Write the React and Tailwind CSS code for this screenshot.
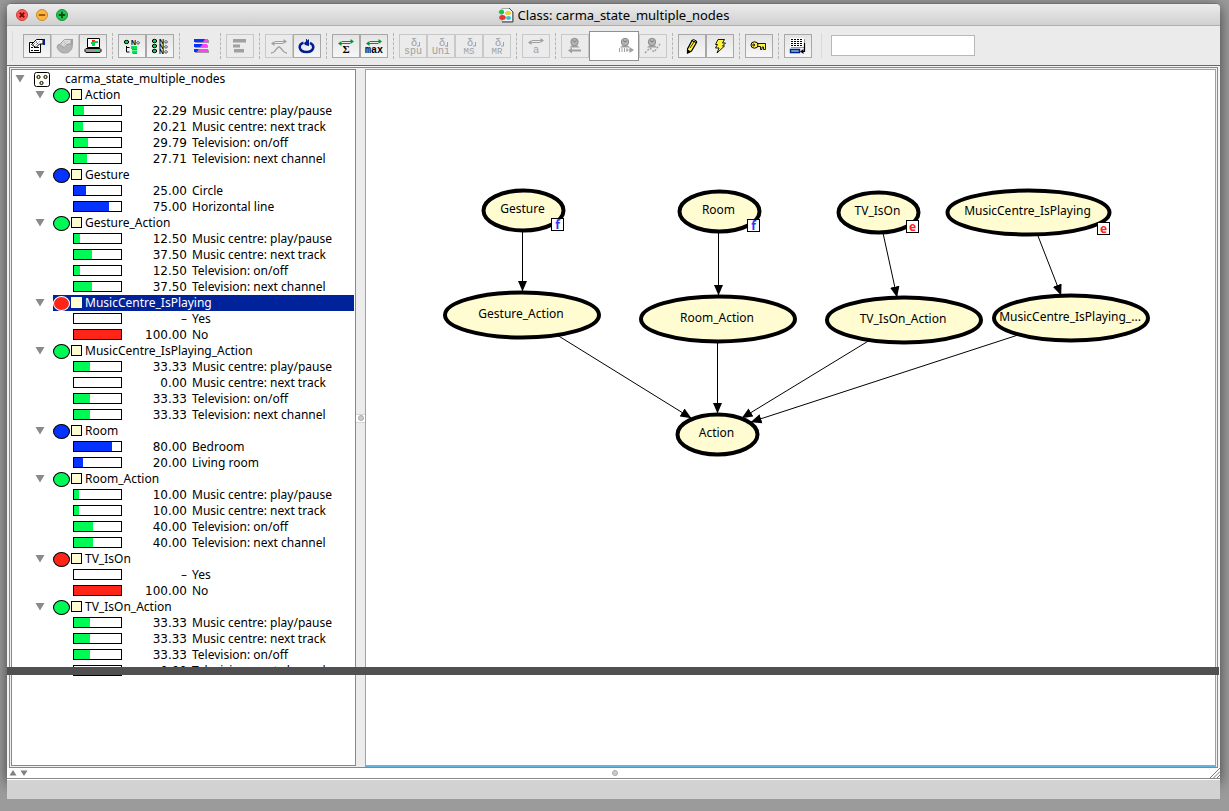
import React from "react";

const UI = "font-['Noto_Sans',sans-serif]";

const FILL = { green: "bg-[#00fa55]", blue: "bg-[#0433ff]", red: "bg-[#ff2418]" };

const ACTIONS = [
  "Music centre: play/pause",
  "Music centre: next track",
  "Television: on/off",
  "Television: next channel",
];
const withActions = (values) => values.map((v, i) => [v, ACTIONS[i]]);

const GROUPS = [
  { name: "Action", color: "green", states: withActions(["22.29", "20.21", "29.79", "27.71"]) },
  { name: "Gesture", color: "blue", states: [["25.00", "Circle"], ["75.00", "Horizontal line"]] },
  { name: "Gesture_Action", color: "green", states: withActions(["12.50", "37.50", "12.50", "37.50"]) },
  { name: "MusicCentre_IsPlaying", color: "red", selected: true, states: [["–", "Yes"], ["100.00", "No"]] },
  { name: "MusicCentre_IsPlaying_Action", color: "green", states: withActions(["33.33", "0.00", "33.33", "33.33"]) },
  { name: "Room", color: "blue", states: [["80.00", "Bedroom"], ["20.00", "Living room"]] },
  { name: "Room_Action", color: "green", states: withActions(["10.00", "10.00", "40.00", "40.00"]) },
  { name: "TV_IsOn", color: "red", states: [["–", "Yes"], ["100.00", "No"]] },
  { name: "TV_IsOn_Action", color: "green", states: withActions(["33.33", "33.33", "33.33", "0.00"]) },
];

function Disclosure({ label }) {
  return (
    <button type="button" aria-label={`Collapse ${label}`} aria-expanded="true" className="flex h-4 w-3 shrink-0 items-center justify-center">
      <svg width="10" height="8" viewBox="0 0 10 8"><path d="M0.5 0h9L5 7.5z" fill="#8a8a8a" /></svg>
    </button>
  );
}

function StateRow({ value, label, color }) {
  const pct = parseFloat(value) || 0;
  return (
    <li className="flex h-4 items-start pl-[61px]">
      <span className="mt-[2px] h-[11px] w-[49px] shrink-0 border border-black bg-white">
        <span className={`block h-full ${FILL[color]}`} style={{ width: `${pct}%` }} />
      </span>
      <span className="w-[65px] shrink-0 text-right font-['DejaVu_Sans',sans-serif]">{value}</span>
      <span className="ml-[5px] whitespace-nowrap">{label}</span>
    </li>
  );
}

function Group({ name, color, selected, states }) {
  return (
    <li>
      <div className="flex h-4 items-center pl-[22px]">
        <Disclosure label={name} />
        <div className={`ml-[7px] flex h-4 grow items-start ${selected ? "bg-[#00229b] text-white" : ""}`}>
          <span className={`mt-px h-[15px] w-[17px] rounded-[50%] border ${selected ? "border-white" : "border-black"} ${FILL[color]}`} />
          <span className={`mt-[2px] ml-px h-[11px] w-[11px] border bg-[#fffcd2] ${selected ? "border-[#fffcd2]" : "border-black"}`} />
          <span className="ml-[3px]">{name}</span>
        </div>
      </div>
      <ul>
        {states.map(([v, l], i) => <StateRow key={i} value={v} label={l} color={color} />)}
      </ul>
    </li>
  );
}

function Tree() {
  return (
    <ul className="pt-px pr-px text-[12px] leading-4 text-black">
      <li>
        <div className="flex h-4 items-center pl-[2px]">
          <Disclosure label="carma_state_multiple_nodes" />
          <svg className="ml-[8px]" width="16" height="16" viewBox="0 0 16 16">
            <rect x="0.5" y="1.5" width="15" height="14" rx="2" fill="#fff" stroke="#000" />
            {[[4.5, 6], [11.5, 6], [7.5, 12]].map(([x, y]) => (
              <circle key={x} cx={x} cy={y} r="1.6" fill="#f5ef7a" stroke="#000" />
            ))}
          </svg>
          <span className="ml-[15px]">carma_state_multiple_nodes</span>
        </div>
        <ul>{GROUPS.map((g) => <Group key={g.name} {...g} />)}</ul>
      </li>
    </ul>
  );
}

const NODES = [
  { label: "Gesture", cx: 157.5, cy: 140.5, rx: 40, ry: 20, badge: ["f", 185, 148] },
  { label: "Room", cx: 353.5, cy: 141.5, rx: 40, ry: 20, badge: ["f", 381, 149] },
  { label: "TV_IsOn", cx: 512.5, cy: 142.5, rx: 40, ry: 20, badge: ["e", 540, 150] },
  { label: "MusicCentre_IsPlaying", cx: 662.5, cy: 142.5, rx: 81, ry: 22, badge: ["e", 731, 152] },
  { label: "Gesture_Action", cx: 156, cy: 245, rx: 77, ry: 22.5 },
  { label: "Room_Action", cx: 352, cy: 249, rx: 77, ry: 22.5 },
  { label: "TV_IsOn_Action", cx: 538, cy: 250, rx: 77, ry: 22.5 },
  { label: "MusicCentre_IsPlaying_...", cx: 705, cy: 248, rx: 77, ry: 22.5 },
  { label: "Action", cx: 351.5, cy: 364.5, rx: 40, ry: 20 },
];

const EDGES = [
  [156.5, 162, 156.5, 221], [352.5, 163, 352.5, 225], [517, 163, 531, 227], [672, 166, 695, 225],
  [191, 265, 325, 348], [351.5, 272, 351.5, 343], [504, 270, 376, 348], [652, 265, 385, 352],
];

function Graph() {
  return (
    <svg className="block" width="810" height="420" viewBox="0 0 810 420" role="img" aria-label="Network diagram">
      <defs>
        <marker id="head" markerUnits="userSpaceOnUse" markerWidth="11" markerHeight="10" refX="10.5" refY="5" orient="auto">
          <path d="M0 0.3L11 5L0 9.7z" fill="#000" />
        </marker>
      </defs>
      {EDGES.map(([x1, y1, x2, y2], i) => (
        <line key={i} x1={x1} y1={y1} x2={x2} y2={y2} stroke="#000" markerEnd="url(#head)" />
      ))}
      {NODES.map((n) => (
        <g key={n.label}>
          <ellipse cx={n.cx} cy={n.cy} rx={n.rx} ry={n.ry} fill="#fffcd2" stroke="#000" strokeWidth="4" />
          <text x={n.cx - 1} y={Math.floor(n.cy + 3)} textAnchor="middle" className="text-[12px]">{n.label}</text>
          {n.badge && (
            <>
              <rect x={n.badge[1] + 0.5} y={n.badge[2] + 0.5} width="12" height="12" fill="#fff" stroke="#000" />
              <text x={n.badge[1] + 6.5} y={n.badge[2] + 11} textAnchor="middle" fill={n.badge[0] === "f" ? "#3333ff" : "#ff2020"} className="font-['Open_Sans',sans-serif] text-[12px] font-bold">
                {n.badge[0]}
              </text>
            </>
          )}
        </g>
      ))}
    </svg>
  );
}

/* Toolbar drawings, on a 28 x 24 grid */
const GRAY = "#a0a0a0";
const MONO = "font-['Liberation_Mono',monospace]";

function Arrows({ color, y = 8 }) {
  return (
    <g>
      <path fill="none" stroke={color} d={`M8 ${y + 1.5}h10M10 ${y - 0.5}h10`} />
      <path fill={color} d={`M6 ${y + 1.5}l3.500-2.500v5zM22 ${y - 0.5}l-3.500-2.500v5z`} />
    </g>
  );
}

function Hand({ cuff, stroke, fill }) {
  return (
    <g>
      <path d="M8.500 10.500L13.500 5.500h6.500v4.500h-3.500l-3.500 3.500z" fill={fill} stroke={stroke} />
      <path d="M10 11l4-4M11.500 12.500l5-5M13 8l3 3" stroke={stroke} strokeWidth="0.700" strokeDasharray="1 1" />
      <path d="M20 5h2v6h-2z" fill={cuff} />
    </g>
  );
}

function NLabel({ y, x = 13 }) {
  return (
    <g>
      <text x={x} y={y + 2.5} className="font-['Liberation_Sans',sans-serif] text-[7px] font-bold">N</text>
      <path d={`M${x + 7} ${y - 0.6}l1.500 1.500-1.500 1.500-1.500-1.500z`} fill="#fff" stroke="#000" strokeWidth="0.800" />
    </g>
  );
}

function Dot({ cx, cy }) {
  return <ellipse cx={cx} cy={cy} rx="2.200" ry="1.700" fill="#00d84c" stroke="#000" />;
}

function Delta({ word, small }) {
  return (
    <g fill={GRAY}>
      <text x="12" y="12" className="font-['Liberation_Sans',sans-serif] text-[11px]">δ</text>
      <path d="M20.500 8v4h-2.500" fill="none" stroke={GRAY} />
      <text x="14" y="20" textAnchor="middle" className={small ? `${MONO} text-[9px]` : `${MONO} text-[10px]`}>{word}</text>
    </g>
  );
}

function Clock({ cx }) {
  return (
    <g>
      <path d={`M${cx - 5} 13.500h10l-2-2h-6z`} fill={GRAY} />
      <circle cx={cx} cy="8" r="3.700" fill="#b4b4b4" stroke="#8c8c8c" />
      <path d={`M${cx - 2} 6.500l2 1.500 2-1.500`} fill="none" stroke="#777" />
    </g>
  );
}

const ICONS = {
  properties: (
    <g>
      <path d="M6.500 8.500h11v10h-11z" fill="#fff" stroke="#000" />
      <path d="M8 13.500h2M11 13.500h5M8 16.500h2M11 16.500h5" stroke="#000" />
      <Hand stroke="#000" fill="#fff" cuff="#001e96" />
    </g>
  ),
  handGray: (
    <g>
      <path d="M6 13q0-3 4-3h10q2 1 1 4q-2 5-7.500 5t-7.500-6z" fill="#b4b4b4" stroke={GRAY} />
      <Hand stroke={GRAY} fill="#ddd" cuff={GRAY} />
    </g>
  ),
  monitor: (
    <g>
      <path d="M8.500 4.500h12v9h-12z" fill="#fff" stroke="#000" />
      <path d="M13 6h3v2h-3z" fill="#ff2418" />
      <path d="M12 8h3v-1h4v2h-3v3h-3v-2h-1z" fill="#00d84c" />
      <path d="M8 14.500h13l1 1v2l-1 1H7l-1-1v-2l1-1z" fill="#999" stroke="#000" />
      <path d="M17 16h2v1h-2z" fill="#00fa55" />
    </g>
  ),
  tree: (
    <g>
      <Dot cx={8.500} cy={8} /><NLabel y={8} />
      <path d="M8.500 12v6h3M8.500 13.500h3" fill="none" stroke="#000" />
      <path d="M13 12h6v3h-6zM14 16.500h5v3h-5z" fill="#00e650" />
      <path d="M14 15.500h5M15 19.500h4" stroke="#777" />
    </g>
  ),
  list: (
    <g>
      {[7, 12, 17].map((y) => <g key={y}><Dot cx={8.500} cy={y} /><NLabel y={y} /></g>)}
    </g>
  ),
  bars: (
    <g>
      <path d="M9 6h14v3h-14zM9 11h13v3h-13zM9 16h14v3h-14z" fill="#999" />
      <path d="M8 5h11v3h-11zM8 10h9l-2 3h-7zM8 15h5l-2 3h-3z" fill="#0433ff" />
      <path d="M19 5h3v3h-5zM17 10h4v3h-7zM13 15h9v3h-10z" fill="#ff40f5" />
    </g>
  ),
  barsGray: <path d="M7 5h13v3.500h-13zM7 10.500h7v3h-7zM8 15h10v3.500h-10z" fill={GRAY} />,
  peak: (
    <g><Arrows color={GRAY} /><path d="M6 19q3 0 5-3.500l2.500-2.500h1l2.500 2.500q2 3.500 5 3.500" fill="none" stroke={GRAY} strokeWidth="1.300" /></g>
  ),
  refresh: (
    <g fill="none" stroke="#001e96">
      <path d="M10.500 8.800Q6.500 10 6.700 13.500Q7.500 18 13.500 18T20.300 13.500Q20.500 10.500 17 8.800" strokeWidth="2.500" />
      <path d="M16 5v7l-4-1-1-2z" fill="#001e96" stroke="none" />
      <path d="M13.500 5v3M12 10l4 1" />
    </g>
  ),
  sigma: (
    <g><Arrows color="#009232" /><text x="14" y="19" textAnchor="middle" className="font-['Liberation_Serif',serif] text-[11px] font-bold">Σ</text></g>
  ),
  max: (
    <g><Arrows color="#009232" /><text x="14" y="19" textAnchor="middle" className={`${MONO} text-[10px] font-bold`}>max</text></g>
  ),
  spu: <Delta word="spu" />,
  uni: <Delta word="Uni" />,
  ms: <Delta word="MS" small />,
  mr: <Delta word="MR" small />,
  a: (
    <g><Arrows color={GRAY} y={7} /><text x="14" y="19" textAnchor="middle" fill={GRAY} className="font-['Liberation_Sans',sans-serif] text-[10px]">a</text></g>
  ),
  back: <g><Clock cx={13.500} /><path d="M20 16.500H9" stroke={GRAY} strokeWidth="2" /><path d="M7 16.500l4-3v6z" fill={GRAY} /></g>,
  forward: <g><Clock cx={14} /><path d="M8.500 14v4M11 14v4M13.500 14v4M16 14v4" stroke={GRAY} /><path d="M15 16h4" stroke={GRAY} /><path d="M18.500 13l4.500 3-4.500 3z" fill={GRAY} /></g>,
  path: <g><Clock cx={13} /><path d="M6 19l5-5 4 4 6-8" fill="none" stroke={GRAY} strokeWidth="1.500" strokeDasharray="2 1.500" /></g>,
  pencil: (
    <g>
      <path d="M9.500 19v-4L14 6.500l4.500 2L13.500 17z" fill="#fff33c" stroke="#000" strokeWidth="1.200" />
      <path d="M14 6.500l1.500-1 3 1.500v1.500z" fill="#fff" stroke="#000" />
      <path d="M12 14l4-6M9.500 19l2.500-1-1.500-2z" fill="#000" stroke="#000" strokeWidth="0.800" />
    </g>
  ),
  bolt: <path d="M12 5.500h6.500l-2 3.500h3l-3 3h2L11 19l2-5h-3.500l2-3.500H9.500z" fill="#fff33c" stroke="#000" strokeWidth="0.900" />,
  key: (
    <g fill="#fff33c" stroke="#000">
      <path d="M12.500 9.500h8v6h-2v-2.500h-1.500v2.500h-1.500v-3h-3z" strokeWidth="0.900" />
      <ellipse cx="9.500" cy="11" rx="3.500" ry="3.200" />
      <ellipse cx="8.700" cy="11" rx="1" ry="0.900" fill="#fff" />
    </g>
  ),
  grid: (
    <g>
      <path d="M7 5h14v9h-14z" fill="#999" /><path d="M6 4h14v9h-14z" fill="#fff" />
      <path d="M7 5.500h12M7 7.500h12M7 9.500h12M7 11.500h12" stroke="#000" strokeDasharray="2 1" />
      <path d="M6.500 15.500h9v3h-9z" fill="#9bb0d8" stroke="#001e96" strokeWidth="1.400" />
      <path d="M8 16.500h2v1h-2z" fill="#00e650" />
      <path d="M20.500 9v8.500h-3" fill="none" stroke="#000" strokeWidth="1.200" />
      <path d="M16 17.500l3.500-2.500v5z" fill="#000" />
    </g>
  ),
};

function ToolButton({ icon, label, look = "on" }) {
  const looks = {
    on: "h-6 w-7 border border-[#a8a8a8] bg-linear-to-b from-[#e4e4e4] to-[#f7f7f7]",
    off: "h-6 w-7 border border-[#c8c8c8] bg-[#ebebeb]",
    plain: "h-6 w-[30px]",
    pressed: "h-[30px] w-[50px] border border-[#909090] bg-white pl-[22px]",
  };
  return (
    <button type="button" aria-label={label} disabled={look === "off"} className={`flex shrink-0 items-center justify-center ${looks[look]}`}>
      <svg width="28" height="24" viewBox="0 0 28 24" className="shrink-0">{ICONS[icon]}</svg>
    </button>
  );
}

const TOOL_GROUPS = [
  [["properties", "Properties"], ["handGray", "Network properties", "off"], ["monitor", "Monitor"]],
  [["tree", "Expand nodes"], ["list", "Collapse nodes"]],
  [["bars", "Belief bars", "plain"]],
  [["barsGray", "Sort beliefs", "off"]],
  [["peak", "Density", "off"], ["refresh", "Reset"]],
  [["sigma", "Sum propagate"], ["max", "Max propagate"]],
  [["spu", "SPU", "off"], ["uni", "Uni", "off"], ["ms", "MS", "off"], ["mr", "MR", "off"]],
  [["a", "Adapt", "off"]],
  [["back", "Step back", "off"], ["forward", "Step forward", "pressed"], ["path", "Trajectory", "off"]],
  [["pencil", "Edit mode"], ["bolt", "Run mode"]],
  [["key", "Key"]],
  [["grid", "Tables"]],
];

function Toolbar() {
  return (
    <div role="toolbar" className="flex h-[39px] items-center overflow-hidden bg-[#ebebeb] pl-[5px]">
      <span className="mr-[10px] h-[30px] w-px bg-[#dcdcdc]" />
      {TOOL_GROUPS.map((group, i) => (
        <React.Fragment key={i}>
          {i > 0 && <span className="mx-[5px] h-[26px] w-px shrink-0 border-l border-dashed border-[#b5b5b5]" />}
          {group.map(([icon, label, look]) => <ToolButton key={icon} icon={icon} label={label} look={look} />)}
        </React.Fragment>
      ))}
      <span className="mr-[9px] ml-[9px] h-[25px] w-px bg-[#d8d8d8]" />
      <input type="text" aria-label="Search" className="h-[21px] w-36 border border-[#b8b8b8] bg-white px-1 text-[12px] outline-none" />
    </div>
  );
}

const LIGHTS = [
  ["Close", "#fc5b57", "#c8403c", "M-2.300 -2.300L2.300 2.300M2.300 -2.300L-2.300 2.300", "#7a0a08"],
  ["Minimize", "#fdb440", "#c98b2c", "M-3.200 0H3.200", "#8f5410"],
  ["Zoom", "#20c64e", "#159038", "M-3.200 0H3.200M0 -3.200V3.200", "#04501a"],
];

function TitleBar() {
  return (
    <header className="relative flex h-[22px] items-center rounded-t-[4px] border-b border-[#b0b0b0] bg-linear-to-b from-[#ececec] to-[#d0d0d0] pl-[9px]">
      <div className="flex gap-2">
        {LIGHTS.map(([label, fill, edge, d, ink]) => (
          <button key={label} type="button" aria-label={label} className="h-3 w-3">
            <svg width="12" height="12" viewBox="-6 -6 12 12" className="block">
              <circle r="5.500" fill={fill} stroke={edge} />
              <path d={d} stroke={ink} strokeWidth="1.800" />
            </svg>
          </button>
        ))}
      </div>
      <h1 className="pointer-events-none absolute inset-x-0 flex items-center justify-center gap-1 text-[13px] leading-5 text-black">
        <svg width="16" height="16" viewBox="0 0 16 16">
          <path d="M4 1.500h7.500l3 3v10H4z" fill="#f4f4f4" stroke="#aaa" />
          <path d="M11 1l4 4v10H4" fill="none" stroke="#444" />
          <path d="M0.500 5l3-3v1.500h2.500v3H3.500V8z" fill="#1fc050" />
          <ellipse cx="3.500" cy="5" rx="2.500" ry="2" fill="#1fc050" />
          <ellipse cx="10" cy="6" rx="3" ry="2" fill="#e8cf3c" />
          <ellipse cx="4.500" cy="10.500" rx="3.300" ry="2.500" fill="#e23a2e" />
          <ellipse cx="10.500" cy="11" rx="2.500" ry="2" fill="#39c0dc" />
        </svg>
        Class: carma_state_multiple_nodes
      </h1>
    </header>
  );
}

export default function App() {
  return (
    <div className={`flex min-h-screen flex-col bg-[#9b9b9b] pt-[3px] pr-[9px] pb-3 pl-[7px] ${UI}`}>
      <div className="flex grow flex-col rounded-t-[5px] border-t border-[#707070] bg-[#f4f4f4] shadow-[0_4px_14px_rgba(0,0,0,0.6)]">
        <TitleBar />
        <Toolbar />
        <main className="relative flex grow flex-col border-t border-[#666] px-[2px] pt-px">
          <div className="flex grow border border-[#888] bg-[#f0f0f0] px-px pt-px">
            <nav aria-label="Nodes" className="mb-px w-[345px] shrink-0 border border-[#888] bg-white">
              <Tree />
            </nav>
            <div role="separator" aria-orientation="vertical" className="flex w-[9px] shrink-0 items-center justify-center bg-[#ececec]">
              <span className="flex h-[9px] w-full items-center justify-center border-y border-[#d4d4d4] bg-white">
                <span className="h-[6px] w-[6px] rounded-full border border-[#aaa] bg-[#ccc]" />
              </span>
            </div>
            <section aria-label="Network" className="min-w-0 grow overflow-hidden border border-b-2 border-[#62b4dd] bg-white">
              <Graph />
            </section>
          </div>
          <div className="absolute top-[601px] right-px left-0 h-2 bg-[#505050]" />
        </main>
        <div className="flex h-[11px] items-center border-b border-[#888] bg-white pl-[2px]">
          <span className="flex flex-1 gap-[3px]">
            <button type="button" aria-label="Show messages"><svg width="8" height="6" viewBox="0 0 8 6" className="block"><path d="M0.500 5.500h7L4 0z" fill="#808080" /></svg></button>
            <button type="button" aria-label="Hide messages"><svg width="8" height="6" viewBox="0 0 8 6" className="block"><path d="M0.500 0.500h7L4 6z" fill="#808080" /></svg></button>
          </span>
          <span className="h-[6px] w-[6px] rounded-full border border-[#aaa] bg-[#ccc]" />
          <span className="flex flex-1 justify-end">
            <svg width="11" height="10" viewBox="0 0 11 10"><path d="M1 10L11 0M4.500 10L11 3.500M8 10l3-3" stroke="#777" fill="none" /></svg>
          </span>
        </div>
      </div>
      <footer className="relative h-5 border-t border-white bg-[#d2d2d2]" />
    </div>
  );
}
